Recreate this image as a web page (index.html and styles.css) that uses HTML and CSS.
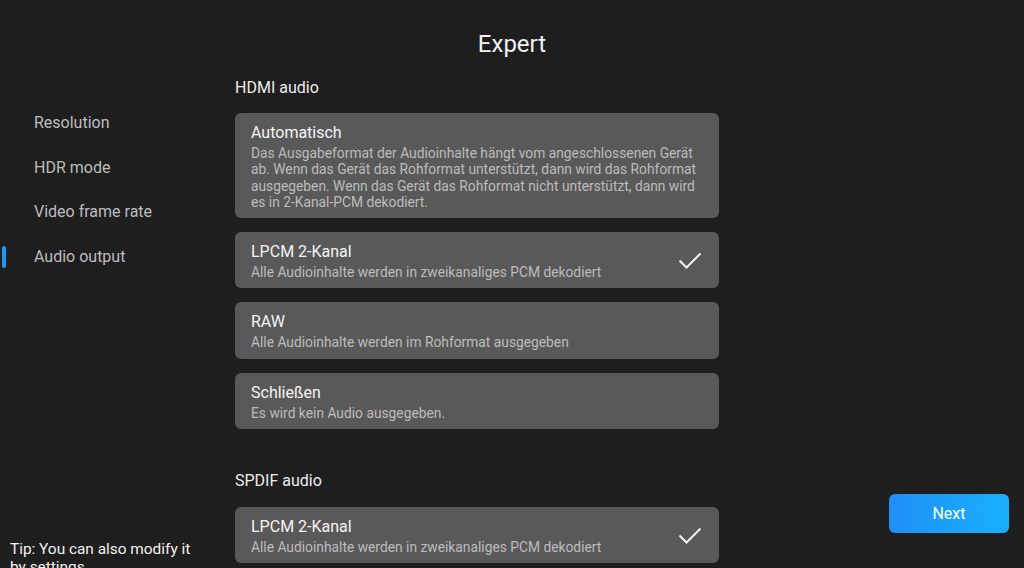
FILE: index.html
```html
<!DOCTYPE html>
<html lang="en">
<head>
<meta charset="UTF-8" />
<meta name="viewport" content="width=device-width, initial-scale=1" />
<title>Expert</title>
<link rel="stylesheet" href="styles.css">
</head>
<body>
  <h1 class="page-title">Expert</h1>

  <div class="layout">
    <aside class="sidebar">
      <ul class="nav">
        <li class="nav-item">Resolution</li>
        <li class="nav-item">HDR mode</li>
        <li class="nav-item">Video frame rate</li>
        <li class="nav-item active">Audio output</li>
      </ul>
      <p class="tip">Tip: You can also modify it by settings</p>
    </aside>

    <main class="options">
      <h2 class="group-title">HDMI audio</h2>
      <div class="option">
        <div class="option-text">
          <div class="option-name">Automatisch</div>
          <div class="option-desc">Das Ausgabeformat der Audioinhalte hängt vom angeschlossenen Gerät ab. Wenn das Gerät das Rohformat unterstützt, dann wird das Rohformat ausgegeben. Wenn das Gerät das Rohformat nicht unterstützt, dann wird es in 2-Kanal-PCM dekodiert.</div>
        </div>
      </div>
      <div class="option selected">
        <div class="option-text">
          <div class="option-name">LPCM 2-Kanal</div>
          <div class="option-desc">Alle Audioinhalte werden in zweikanaliges PCM dekodiert</div>
        </div>
        <svg class="check" viewBox="0 0 24 18" width="24" height="18"><path d="M1.5 8.5 L8.5 15.5 L22.5 1.5" fill="none" stroke="#f2f2f2" stroke-width="2"/></svg>
      </div>
      <div class="option">
        <div class="option-text">
          <div class="option-name">RAW</div>
          <div class="option-desc">Alle Audioinhalte werden im Rohformat ausgegeben</div>
        </div>
      </div>
      <div class="option">
        <div class="option-text">
          <div class="option-name">Schließen</div>
          <div class="option-desc">Es wird kein Audio ausgegeben.</div>
        </div>
      </div>

      <h2 class="group-title spdif">SPDIF audio</h2>
      <div class="option selected">
        <div class="option-text">
          <div class="option-name">LPCM 2-Kanal</div>
          <div class="option-desc">Alle Audioinhalte werden in zweikanaliges PCM dekodiert</div>
        </div>
        <svg class="check" viewBox="0 0 24 18" width="24" height="18"><path d="M1.5 8.5 L8.5 15.5 L22.5 1.5" fill="none" stroke="#f2f2f2" stroke-width="2"/></svg>
      </div>
    </main>

    <div class="actions">
      <button class="next-btn">Next</button>
    </div>
  </div>
</body>
</html>
```

FILE: styles.css
```css
html, body {
  margin: 0;
  height: 568px;
  overflow: hidden;
}
body {
  font-family: Roboto, 'Noto Sans', sans-serif;
  background: #1e1e1e;
  color: #eee;
}
.page-title {
  margin: 0;
  padding-top: 30px;
  font-size: 24px;
  font-weight: 400;
  line-height: 28px;
  text-align: center;
  color: #f2f2f2;
}
.layout {
  display: grid;
  grid-template-columns: 235px 484px 1fr;
}
.sidebar {
  display: flex;
  flex-direction: column;
}
.nav {
  list-style: none;
  margin: 0;
  padding: 43px 0 0 0;
}
.nav-item {
  position: relative;
  padding-left: 34px;
  font-size: 16px;
  line-height: 44.7px;
  color: #bdbdbd;
}
.nav-item.active::before {
  content: "";
  position: absolute;
  left: 2px;
  top: 11px;
  width: 4px;
  height: 22px;
  border-radius: 2px;
  background: #2196f3;
}
.tip {
  margin: 260px 0 0 10px;
  width: 182px;
  font-size: 15.4px;
  line-height: 18px;
  color: #f2f2f2;
}
.options {
  display: flex;
  flex-direction: column;
  gap: 14px;
}
.group-title {
  margin: 20px 0 1px 0;
  font-size: 16px;
  font-weight: 400;
  line-height: 20px;
  color: #ededed;
}
.group-title.spdif {
  margin-top: 28px;
  margin-bottom: 2px;
}
.option {
  display: flex;
  align-items: center;
  background: #595959;
  border-radius: 6px;
  padding: 10px 17px 8px 16px;
}
.option-text {
  flex: 1;
}
.option-name {
  font-size: 16px;
  line-height: 20px;
  color: #f4f4f4;
  margin-bottom: 2px;
}
.option-desc {
  font-size: 13.8px;
  line-height: 16.25px;
  color: #bcbcbc;
}
.check {
  flex-shrink: 0;
  margin-left: 12px;
}
.actions {
  display: flex;
  justify-content: flex-end;
  padding: 436px 15px 0 0;
}
.next-btn {
  width: 120px;
  height: 39px;
  border: none;
  border-radius: 6px;
  background: linear-gradient(90deg, #1f8ff5, #19b0fe);
  color: #fff;
  font-family: inherit;
  font-size: 16px;
  cursor: pointer;
}
```
